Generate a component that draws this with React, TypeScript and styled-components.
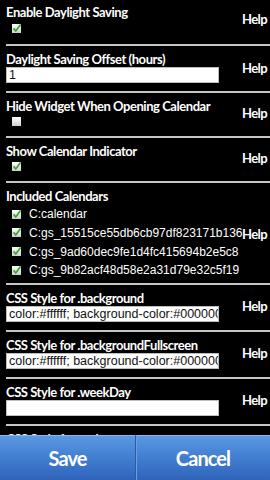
import React from "react";
import styled, { createGlobalStyle } from "styled-components";

const Global = createGlobalStyle`
  html, body { margin: 0; padding: 0; background: #000; overflow: hidden; }
  #root { width: 270px; height: 480px; }
`;

const TITLE_FONT = `Lato, "Liberation Sans", sans-serif`;
const BODY_FONT = `"Liberation Sans", Arial, sans-serif`;

const Screen = styled.div`
  width: 270px;
  height: 480px;
  display: flex;
  flex-direction: column;
  background: #000;
  color: #fff;
`;

const Content = styled.div`
  flex: 1;
  overflow: hidden;
  padding-left: 6px;
`;

const Row = styled.div<{ $pb: number; $pt?: number }>`
  display: grid;
  grid-template-columns: 1fr 30px;
  align-items: center;
  padding: ${(p) => p.$pt ?? 6}px 0 ${(p) => p.$pb}px 0;
  border-bottom: 2px solid #c6c6c6;
`;

const Main = styled.div`
  display: flex;
  flex-direction: column;
  align-items: flex-start;
  min-width: 0;
`;

const Title = styled.div`
  font-family: ${TITLE_FONT};
  font-weight: bold;
  font-size: 13px;
  line-height: 14px;
  letter-spacing: -0.45px;
  color: #fff;
  white-space: nowrap;
`;

const Help = styled.div`
  font-family: ${TITLE_FONT};
  font-weight: bold;
  font-size: 13px;
  line-height: 14px;
  letter-spacing: -0.6px;
  color: #fff;
  padding-left: 2px;
  white-space: nowrap;
`;

const Box = styled.span<{ $mt: number; $ml: number }>`
  display: inline-block;
  width: 9px;
  height: 9px;
  margin-top: ${(p) => p.$mt}px;
  margin-left: ${(p) => p.$ml}px;
  background: linear-gradient(#ffffff, #cfcfcf);
  position: relative;
  flex: none;
`;

const Tick = styled.svg`
  position: absolute;
  left: 0;
  top: -1px;
`;

const TextInput = styled.div`
  box-sizing: border-box;
  width: 213px;
  height: 16px;
  margin-top: 1px;
  background: #fff;
  border: 1px solid #bdbdbd;
  color: #111;
  font-family: ${BODY_FONT};
  font-size: 12.5px;
  line-height: 14px;
  padding: 0 2px;
  white-space: nowrap;
  overflow: hidden;
`;

const List = styled.div`
  margin-top: 2px;
  display: flex;
  flex-direction: column;
`;

const Item = styled.div`
  display: flex;
  align-items: center;
  height: 18.67px;
`;

const ItemText = styled.span`
  margin-left: 8px;
  font-family: ${BODY_FONT};
  font-size: 12px;
  color: #fff;
  white-space: nowrap;
`;

const Footer = styled.div`
  height: 45px;
  flex: none;
  display: grid;
  grid-template-columns: 135px 1fr;
  background: linear-gradient(#5d9ae2 0%, #4481d2 45%, #2f63ba 100%);
  box-shadow: inset 0 1px 0 #86b6ee;
`;

const FooterButton = styled.div<{ $divider?: boolean }>`
  display: flex;
  align-items: center;
  justify-content: center;
  font-family: ${TITLE_FONT};
  font-weight: bold;
  font-size: 20px;
  letter-spacing: -0.9px;
  color: #fff;
  border-left: ${(p) => (p.$divider ? "1px solid #2c5aa6" : "none")};
  box-shadow: ${(p) => (p.$divider ? "inset 1px 0 0 #6c9fe0" : "none")};
`;

const Check = ({ checked, mt, ml }: { checked: boolean; mt: number; ml: number }) => (
  <Box $mt={mt} $ml={ml}>
    {checked && (
      <Tick width="10" height="10" viewBox="0 0 10 10">
        <path d="M1.6 5.4 L3.8 8 L8.6 1.6" fill="none" stroke="#3aa52a" strokeWidth="1.7" />
      </Tick>
    )}
  </Box>
);

const calendars = [
  "C:calendar",
  "C:gs_15515ce55db6cb97df823171b136",
  "C:gs_9ad60dec9fe1d4fc415694b2e5c8",
  "C:gs_9b82acf48d58e2a31d79e32c5f19",
];

export default function App() {
  return (
    <>
      <Global />
      <Screen>
        <Content>
          <Row $pt={5} $pb={11}>
            <Main>
              <Title>Enable Daylight Saving</Title>
              <Check checked mt={5} ml={6} />
            </Main>
            <Help>Help</Help>
          </Row>
          <Row $pb={8}>
            <Main>
              <Title>Daylight Saving Offset (hours)</Title>
              <TextInput>1</TextInput>
            </Main>
            <Help>Help</Help>
          </Row>
          <Row $pb={10}>
            <Main>
              <Title>Hide Widget When Opening Calendar</Title>
              <Check checked={false} mt={4} ml={6} />
            </Main>
            <Help>Help</Help>
          </Row>
          <Row $pb={10}>
            <Main>
              <Title>Show Calendar Indicator</Title>
              <Check checked mt={4} ml={6} />
            </Main>
            <Help>Help</Help>
          </Row>
          <Row $pb={3}>
            <Main>
              <Title>Included Calendars</Title>
              <List>
                {calendars.map((c) => (
                  <Item key={c}>
                    <Check checked mt={0} ml={6} />
                    <ItemText>{c}</ItemText>
                  </Item>
                ))}
              </List>
            </Main>
            <Help>Help</Help>
          </Row>
          <Row $pb={8}>
            <Main>
              <Title>CSS Style for .background</Title>
              <TextInput>color:#ffffff; background-color:#000000;</TextInput>
            </Main>
            <Help>Help</Help>
          </Row>
          <Row $pb={8}>
            <Main>
              <Title>CSS Style for .backgroundFullscreen</Title>
              <TextInput>color:#ffffff; background-color:#000000;</TextInput>
            </Main>
            <Help>Help</Help>
          </Row>
          <Row $pb={8}>
            <Main>
              <Title>CSS Style for .weekDay</Title>
              <TextInput />
            </Main>
            <Help>Help</Help>
          </Row>
          <Row $pb={8}>
            <Main>
              <Title>CSS Style for .today</Title>
              <TextInput />
            </Main>
            <Help>Help</Help>
          </Row>
        </Content>
        <Footer>
          <FooterButton>Save</FooterButton>
          <FooterButton $divider>Cancel</FooterButton>
        </Footer>
      </Screen>
    </>
  );
}
